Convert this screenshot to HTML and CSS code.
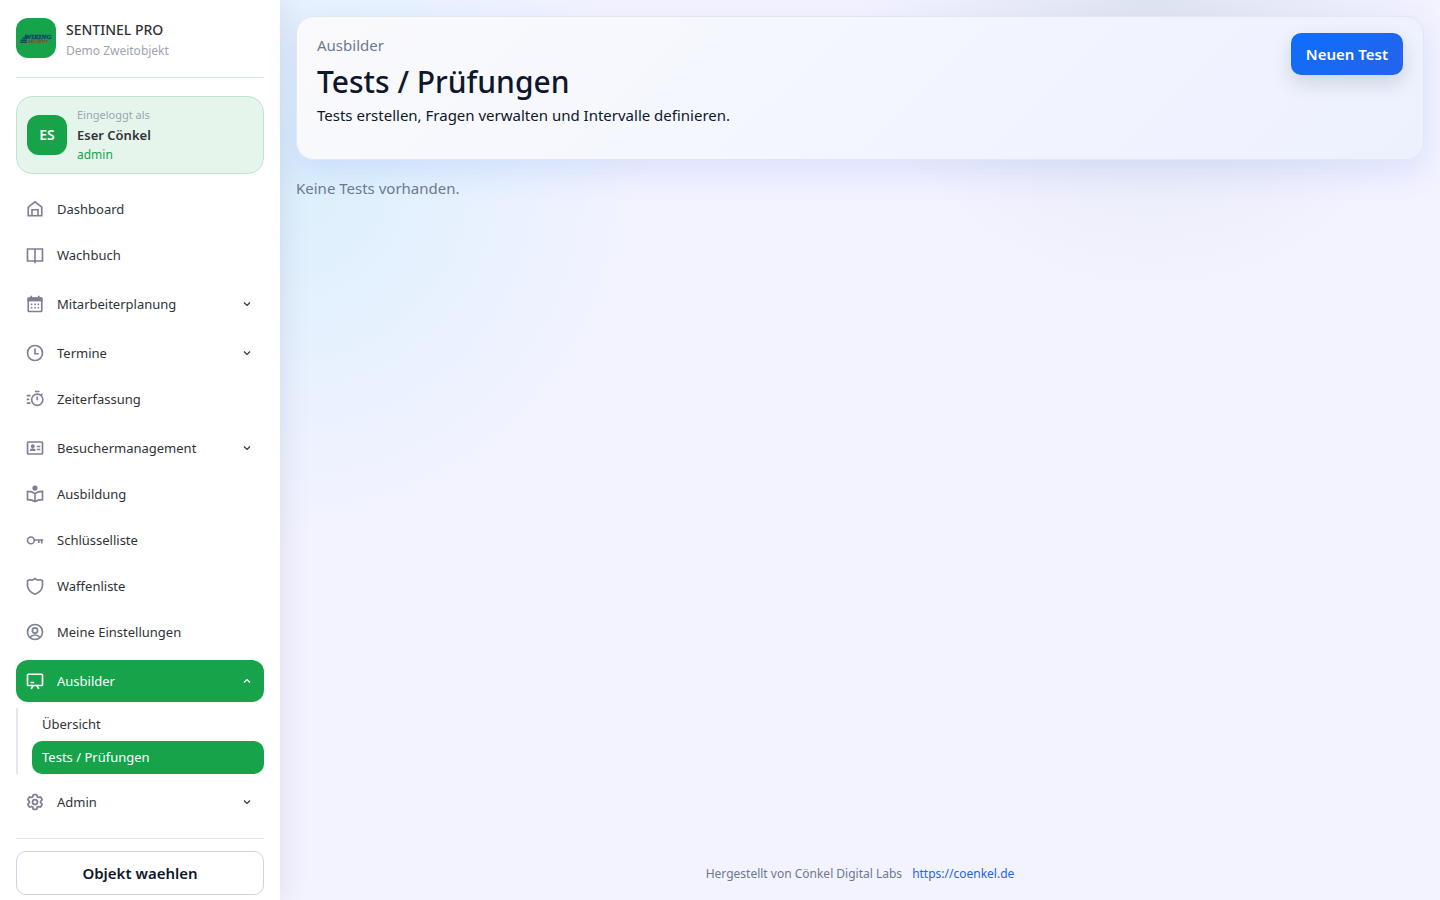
FILE: index.html
```
<!DOCTYPE html>
<html lang="de">
<head>
    <meta charset="UTF-8">
    <meta name="viewport" content="width=device-width, initial-scale=1.0">
    <title>Tests / Prüfungen - Sentinel Pro</title>
    <link rel="stylesheet" href="styles.css">
</head>
<body>

    <aside class="sidebar">
        <div class="brand">
            <div class="brand-logo">
                <svg viewBox="0 0 40 40" width="40" height="40" aria-hidden="true">
                    <path d="M4 25l1-4 1 1 1-3 1 1 2-4 1 9z" fill="#16466b"/>
                    <path d="M4 23.500h7M6 21.500h5" stroke="#16a34a" stroke-width=".5"/>
                    <text x="9" y="21" class="logo-name">WIKING</text>
                    <text x="12" y="25" class="logo-sub">SECURITY</text>
                </svg>
            </div>
            <div class="brand-text">
                <div class="brand-name">SENTINEL PRO</div>
                <div class="brand-object">Demo Zweitobjekt</div>
            </div>
        </div>

        <div class="user-card">
            <div class="avatar">ES</div>
            <div>
                <div class="user-label">Eingeloggt als</div>
                <div class="user-name">Eser Cönkel</div>
                <div class="user-role">admin</div>
            </div>
        </div>

        <nav>
            <ul class="menu">
                <li><a href="#" class="menu-link">
                    <svg class="icon" viewBox="0 0 24 24"><path d="M3 9.500L12 2.500l9 7V21H3z"/><path d="M8 21v-8h8v8"/></svg>
                    Dashboard</a></li>
                <li><a href="#" class="menu-link">
                    <svg class="icon" viewBox="0 0 24 24"><path d="M2 4h20v16H2zM12 4v19"/></svg>
                    Wachbuch</a></li>
                <li class="has-sub"><button type="button" class="menu-link">
                    <svg class="icon" viewBox="0 0 24 24"><rect x="3" y="4" width="18" height="18" rx="1"/><path d="M2 6h20" stroke-width="5"/><path d="M7 1v4M17 1v4"/><path d="M6.500 12.500h2m2.500 0h2m2.500 0h2M6.500 17h2m2.500 0h2m2.500 0h2"/></svg>
                    Mitarbeiterplanung
                    <svg class="arrow" viewBox="0 0 8 8"><path d="M1 2.500l3 3 3-3"/></svg></button></li>
                <li class="has-sub"><button type="button" class="menu-link">
                    <svg class="icon" viewBox="0 0 24 24"><circle cx="12" cy="12" r="10"/><path d="M12 6v7h5"/></svg>
                    Termine
                    <svg class="arrow" viewBox="0 0 8 8"><path d="M1 2.500l3 3 3-3"/></svg></button></li>
                <li><a href="#" class="menu-link">
                    <svg class="icon" viewBox="0 0 24 24"><circle cx="15" cy="13" r="7.500"/><path d="M12 2h6M20 7l2-2M15 8.500v5M1 7.500h5M1 12.500h3.500M1 17.500h5"/></svg>
                    Zeiterfassung</a></li>
                <li class="has-sub"><button type="button" class="menu-link">
                    <svg class="icon" viewBox="0 0 24 24"><rect x="2" y="4" width="20" height="16" rx="1"/><circle cx="9" cy="9.500" r="2.500" class="solid"/><path d="M5 16c0-5 8-5 8 0z" class="solid"/><path d="M14.500 10H19M14.500 14H19"/></svg>
                    Besuchermanagement
                    <svg class="arrow" viewBox="0 0 8 8"><path d="M1 2.500l3 3 3-3"/></svg></button></li>
                <li><a href="#" class="menu-link">
                    <svg class="icon" viewBox="0 0 24 24"><circle cx="12" cy="4" r="3.500" class="solid"/><path d="M12 22V11M12 11.500C9 9 6 8.500 2 8.500v11c4 0 7 .5 10 2.500 3-2 6-2.500 10-2.500v-11c-4 0-7 .5-10 3"/></svg>
                    Ausbildung</a></li>
                <li><a href="#" class="menu-link">
                    <svg class="icon" viewBox="0 0 24 24"><circle cx="6.500" cy="12.500" r="4.500"/><path d="M11 12h12M21 12v4.500M17 12v4"/></svg>
                    Schlüsselliste</a></li>
                <li><a href="#" class="menu-link">
                    <svg class="icon" viewBox="0 0 24 24"><path d="M12 2c2 2 4.500 3 7 1.500L22 5v6c0 6-4 9.500-10 12C6 20.500 2 17 2 11V5l3-1.500C7.500 5 10 4 12 2z"/></svg>
                    Waffenliste</a></li>
                <li><a href="#" class="menu-link">
                    <svg class="icon" viewBox="0 0 24 24"><circle cx="12" cy="12" r="10"/><circle cx="12" cy="10" r="3.500"/><path d="M5.500 19c3-4 10-4 13 0"/></svg>
                    Meine Einstellungen</a></li>
                <li class="has-sub">
                    <button type="button" class="menu-link active">
                        <svg class="icon" viewBox="0 0 24 24"><rect x="2" y="3" width="20" height="15" rx="1"/><path d="M9.500 18L7 22.500M14.500 18l2.500 4.500M6 14h5"/></svg>
                        Ausbilder
                        <svg class="arrow" viewBox="0 0 8 8"><path d="M1 5.500l3-3 3 3"/></svg>
                    </button>
                    <ul class="submenu">
                        <li><a href="#">Übersicht</a></li>
                        <li><a href="#" class="active">Tests / Prüfungen</a></li>
                    </ul>
                </li>
                <li class="has-sub"><button type="button" class="menu-link">
                    <svg class="icon" viewBox="1 1 22 22"><path d="M9.594 3.940c.09-.542.56-.94 1.110-.94h2.593c.55 0 1.020.398 1.110.94l.213 1.281c.063.374.313.686.645.87.074.04.147.083.22.127.325.196.72.257 1.075.124l1.217-.456a1.125 1.125 0 0 1 1.370.49l1.296 2.247a1.125 1.125 0 0 1-.26 1.431l-1.003.827c-.293.241-.438.613-.43.992a7.723 7.723 0 0 1 0 .255c-.008.378.137.75.43.991l1.004.827c.424.35.534.955.26 1.430l-1.298 2.247a1.125 1.125 0 0 1-1.369.491l-1.217-.456c-.355-.133-.75-.072-1.076.124a6.470 6.470 0 0 1-.22.128c-.331.183-.581.495-.644.869l-.213 1.281c-.09.543-.56.94-1.110.94h-2.594c-.55 0-1.019-.398-1.110-.94l-.213-1.281c-.062-.374-.312-.686-.644-.87a6.520 6.520 0 0 1-.22-.127c-.325-.196-.72-.257-1.076-.124l-1.217.456a1.125 1.125 0 0 1-1.369-.49l-1.297-2.247a1.125 1.125 0 0 1 .26-1.431l1.004-.827c.292-.24.437-.613.43-.991a6.932 6.932 0 0 1 0-.255c.007-.38-.138-.751-.43-.992l-1.004-.827a1.125 1.125 0 0 1-.26-1.430l1.297-2.247a1.125 1.125 0 0 1 1.370-.491l1.216.456c.356.133.751.072 1.076-.124.072-.044.146-.086.22-.128.332-.183.582-.495.644-.869l.214-1.280z"/><circle cx="12" cy="12" r="3"/></svg>
                    Admin
                    <svg class="arrow" viewBox="0 0 8 8"><path d="M1 2.500l3 3 3-3"/></svg></button></li>
            </ul>
        </nav>

        <div class="sidebar-footer">
            <button type="button" class="object-button">Objekt waehlen</button>
        </div>
    </aside>

    <div class="page">
        <main>
            <header class="page-header">
                <div>
                    <div class="section-name">Ausbilder</div>
                    <h1>Tests / Prüfungen</h1>
                    <p>Tests erstellen, Fragen verwalten und Intervalle definieren.</p>
                </div>
                <button type="button" class="new-button">Neuen Test</button>
            </header>
            <p class="empty">Keine Tests vorhanden.</p>
        </main>
        <footer>
            <span>Hergestellt von Cönkel Digital Labs</span>
            <a href="https://coenkel.de">https://coenkel.de</a>
        </footer>
    </div>

</body>
</html>
```
FILE: styles.css
```
* {
    box-sizing: border-box;
}
body {
    margin: 0;
    min-height: 100vh;
    display: flex;
    font-family: "Noto Sans", "Open Sans", sans-serif;
    font-size: 15px;
    line-height: 24px;
    color: #0f172a;
    background:
        radial-gradient(circle at 20% 20%, rgba(34, 211, 238, 0.11), transparent 27%),
        radial-gradient(circle at 80% 0%, rgba(15, 90, 70, 0.09), transparent 20%),
        #f3f3ff;
}
button {
    font-family: inherit;
    cursor: pointer;
}
ul {
    list-style: none;
    margin: 0;
    padding: 0;
}
a {
    text-decoration: none;
}

/* Sidebar */
.sidebar {
    width: 280px;
    flex-shrink: 0;
    padding: 18px 16px 5px;
    display: flex;
    flex-direction: column;
    background: white;
    box-shadow: 0 0 28px rgba(47, 43, 100, 0.12);
}
.brand {
    display: flex;
    gap: 10px;
    height: 60px;
    border-bottom: 1px solid #d5e8e0;
}
.brand-logo,
.avatar {
    width: 40px;
    height: 40px;
    border-radius: 12px;
    background: #16a34a;
}
.logo-name {
    font: italic bold 7px "Liberation Serif", serif;
    fill: #123f6d;
    stroke: #123f6d;
    stroke-width: 0.3;
}
.logo-sub {
    font: italic bold 4px "Liberation Sans", sans-serif;
    fill: #8c3b2c;
}
.brand-name {
    font-size: 14px;
    font-weight: 500;
    color: #2f3338;
}
.brand-object {
    font-size: 12px;
    line-height: 18px;
    color: #a0a3b1;
}
.user-card {
    display: flex;
    align-items: center;
    gap: 10px;
    margin: 18px 0 14px;
    padding: 8px 10px;
    border: 1px solid #bfe5cd;
    border-radius: 16px;
    background: #e6f5ec;
}
.avatar {
    display: flex;
    align-items: center;
    justify-content: center;
    color: white;
    font-size: 14px;
    font-weight: 600;
}
.user-label {
    font-size: 11px;
    line-height: 20px;
    color: #a0a3b1;
}
.user-name {
    font-size: 13px;
    line-height: 20px;
    font-weight: 600;
    color: #2f3338;
}
.user-role {
    font-size: 12px;
    line-height: 20px;
    color: #16a34a;
}

/* Menu */
.menu {
    display: flex;
    flex-direction: column;
    gap: 4px;
}
.has-sub {
    margin-top: 3px;
}
.menu-link {
    display: flex;
    align-items: center;
    width: 100%;
    height: 42px;
    padding: 0 10px;
    border: none;
    border-radius: 12px;
    background: none;
    color: #2f3338;
    font-size: 13px;
}
.icon {
    width: 18px;
    height: 18px;
    margin-right: 13px;
    fill: none;
    stroke: #7c8094;
    stroke-width: 2.2;
}
.icon .solid {
    fill: #7c8094;
    stroke: none;
}
.arrow {
    width: 8px;
    height: 8px;
    margin: 0 3px 0 auto;
    fill: none;
    stroke: #2f3338;
    stroke-width: 1.2;
}
.menu-link.active,
.submenu .active {
    background: #16a34a;
    color: white;
}
.active .icon,
.active .arrow {
    stroke: white;
}
.submenu {
    margin-top: 6px;
    padding-left: 14px;
    border-left: 2px solid #e6e6f2;
}
.submenu a {
    display: block;
    padding: 0 10px;
    border-radius: 10px;
    line-height: 33px;
    font-size: 13px;
    color: #2f3338;
}
.sidebar-footer {
    margin-top: 15px;
    padding-top: 12px;
    border-top: 1px solid #e3e3ef;
}
.object-button {
    width: 100%;
    height: 44px;
    border: 1px solid #cbd5e1;
    border-radius: 10px;
    background: white;
    color: #0f172a;
    font-size: 15px;
    font-weight: 600;
}

/* Content */
.page {
    flex: 1;
    display: flex;
    flex-direction: column;
    padding: 16px 16px 14px;
}
main {
    flex: 1;
}
.page-header {
    display: flex;
    justify-content: space-between;
    align-items: flex-start;
    padding: 16px 20px 32px;
    border: 1px solid #e2e8f0;
    border-radius: 18px;
    background: linear-gradient(135deg, #fafafc, #f3f6ff 50%, #edf1fe);
    box-shadow: 0 12px 32px rgba(37, 99, 235, 0.12);
}
.section-name,
.empty {
    color: #6b7a8d;
}
h1 {
    margin: 5px 0 1px;
    font-size: 30px;
    line-height: 40px;
    font-weight: 500;
}
p {
    margin: 0;
}
.new-button {
    height: 42px;
    padding: 0 15px;
    border: none;
    border-radius: 10px;
    background: linear-gradient(135deg, #0d6efd, #2563eb);
    box-shadow: 0 8px 20px rgba(15, 23, 42, 0.14);
    color: white;
    font-size: 15px;
    font-weight: 600;
}
.empty {
    margin-top: 16px;
}
footer {
    display: flex;
    justify-content: center;
    gap: 10px;
    font-size: 12px;
    color: #6b7a8d;
}
footer a {
    color: #2563eb;
}
```
